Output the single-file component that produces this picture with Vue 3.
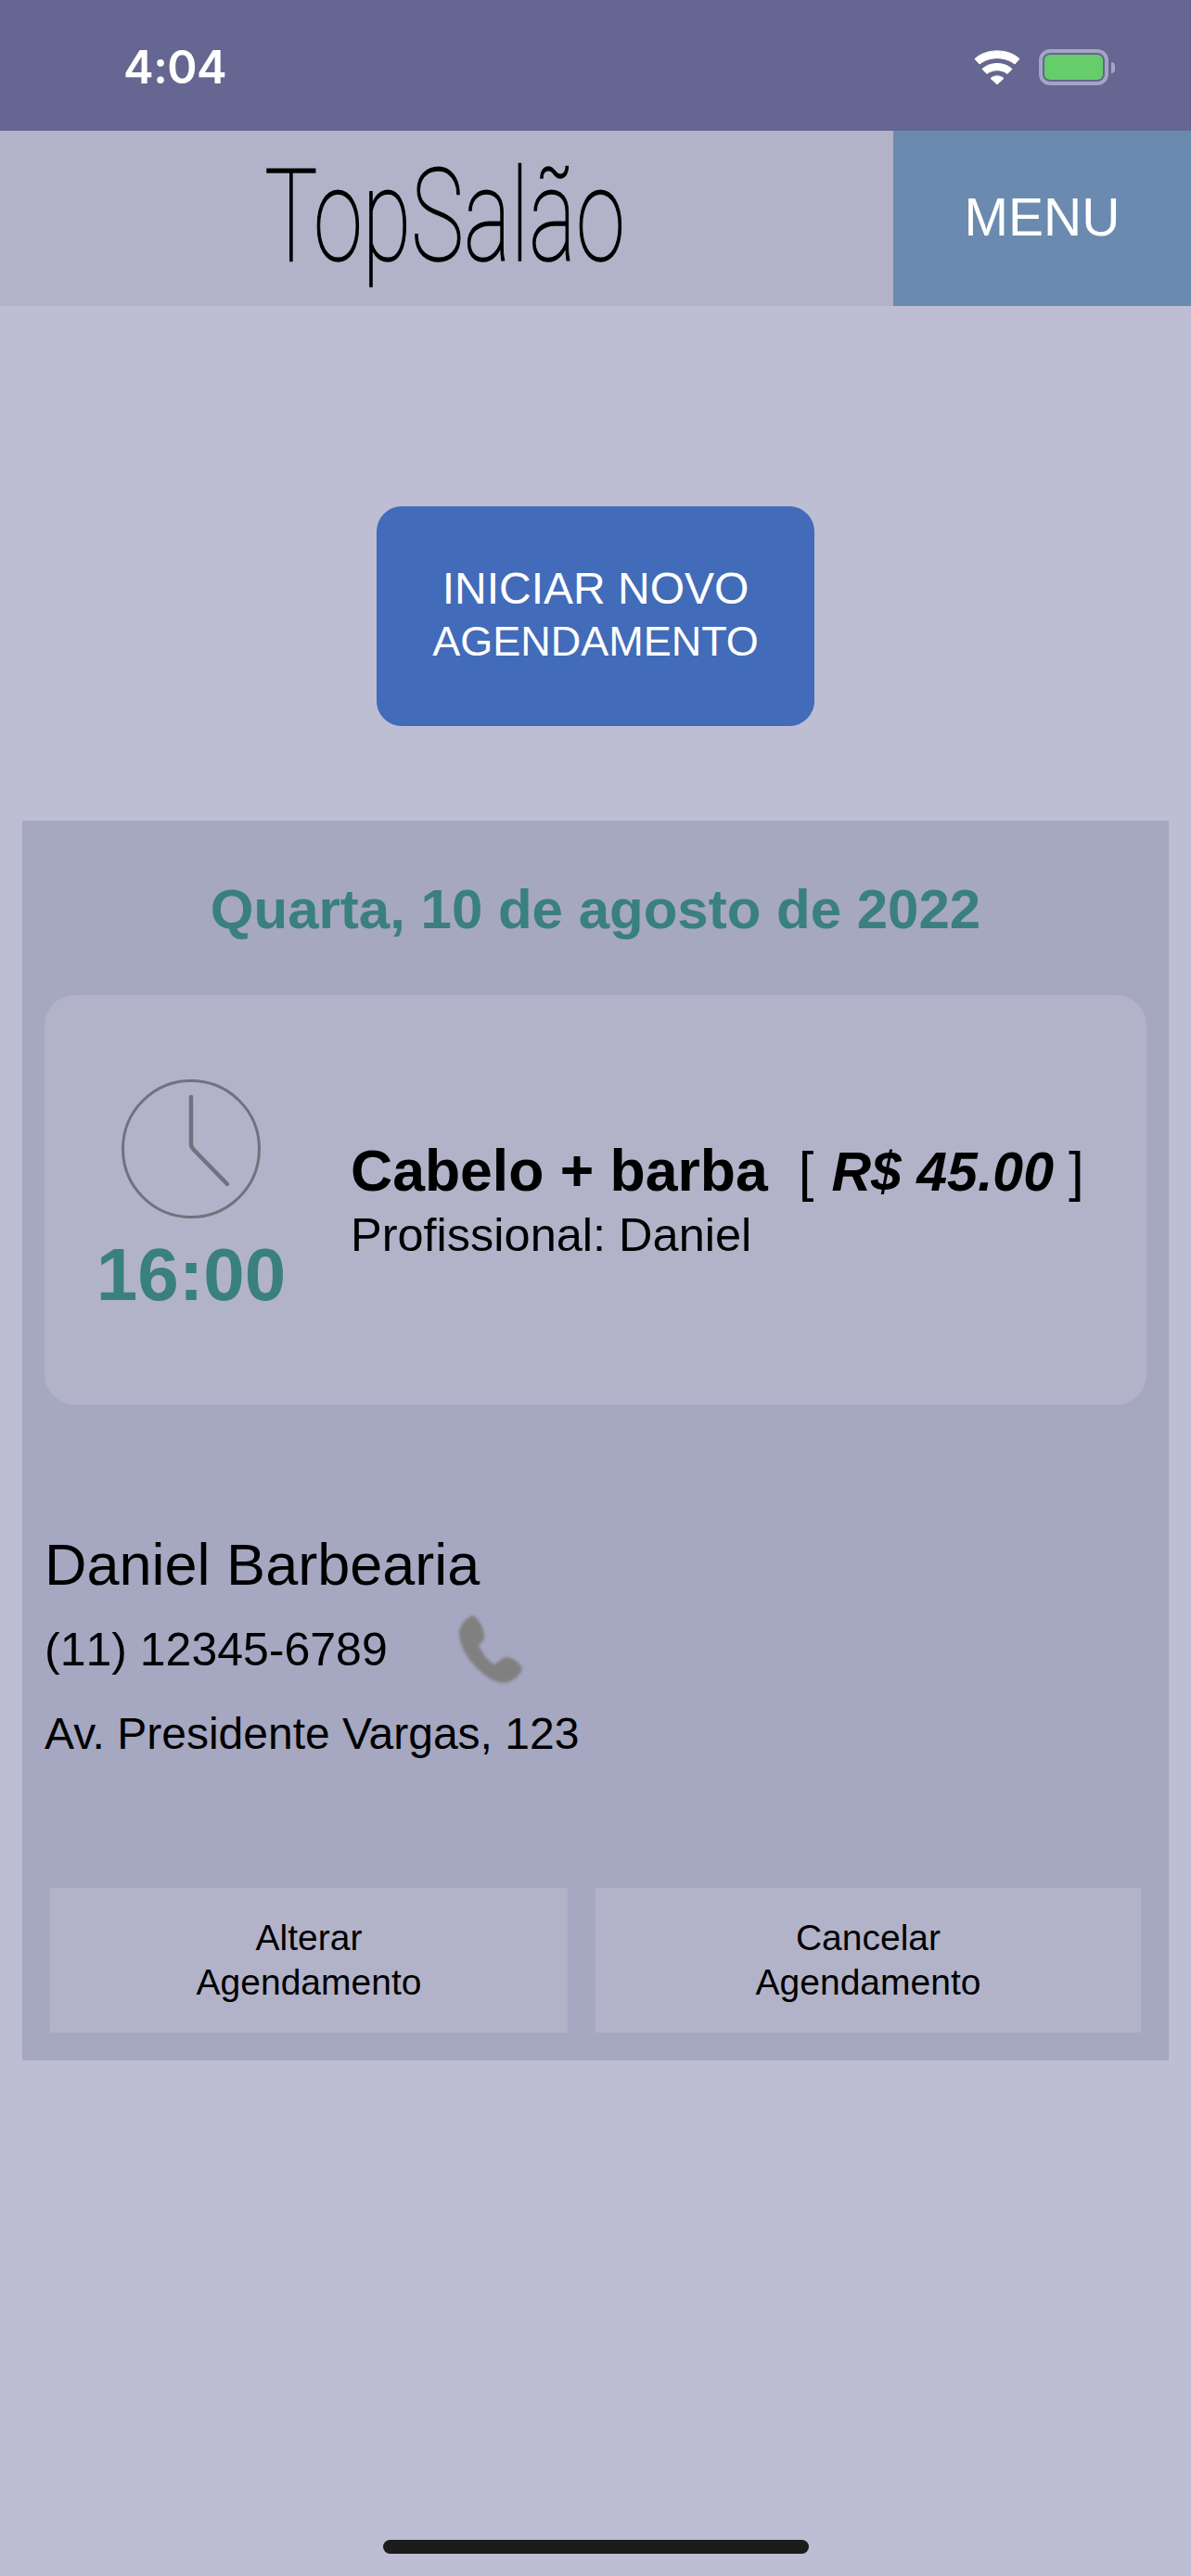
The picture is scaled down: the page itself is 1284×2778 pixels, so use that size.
<script setup>
const actions = ['Alterar', 'Cancelar']
</script>

<template>
  <div class="page">
    <div class="status">
      <span class="clock-text">4:04</span>
      <div class="status-icons">
        <svg class="wifi" width="50" height="38" viewBox="0 0 50 38" fill="#fff" stroke="#fff" stroke-width="1" stroke-linejoin="round">
          <path d="M1 9.5C13 -2 37 -2 49 9.5L44 15C33 6.5 17 6.5 6 15Z" />
          <path d="M9 20.5C17 12.5 33 12.5 41 20.5L36 25.5C29.5 20.5 20.5 20.5 14 25.5Z" />
          <path d="M18 30.5C22 27 28 27 32 30.5L25 37Z" />
        </svg>
        <div class="battery"><div class="battery-fill"></div></div>
        <div class="battery-nub"></div>
      </div>
    </div>
    <header class="topbar">
      <div class="logo"><span class="logo-text">TopSalão</span></div>
      <div class="menu">MENU</div>
    </header>
    <main class="content">
      <div class="cta"><span>INICIAR NOVO</span><span class="cta-small">AGENDAMENTO</span></div>
      <section class="panel">
        <h2 class="date">Quarta, 10 de agosto de 2022</h2>
        <div class="card">
          <div class="time">
            <svg width="150" height="150" viewBox="0 0 150 150" fill="none" stroke="#71717f" stroke-linecap="round" stroke-linejoin="round">
              <circle cx="75" cy="75" r="73.5" stroke-width="3" />
              <path d="M75 19V70Q75 73 78 76L114 113" stroke-width="4.5" />
            </svg>
            <div class="hour">16:00</div>
          </div>
          <div class="service">
            <div class="service-title"><b>Cabelo + barba</b><span class="price">[<b class="amount"><i>R$ 45.00</i></b>]</span></div>
            <div class="pro">Profissional: Daniel</div>
          </div>
        </div>
        <div class="shop">
          <div class="shop-name">Daniel Barbearia</div>
          <div class="shop-phone">
            <span>(11) 12345-6789</span>
            <svg class="phone" width="68" height="74" viewBox="0 0 68 74">
              <path d="M15 0C7 3 1 10 0 19C0 35 13 54 30 66C38 72 46 74 53 72C60 70 66 64 68 58C66 51 58 46 52 45C47 45 43 50 38 53C31 49 25 41 21 32C25 29 27 27 27 22C27 15 22 5 15 0Z" fill="#808080" />
            </svg>
          </div>
          <div class="shop-address">Av. Presidente Vargas, 123</div>
        </div>
        <div class="actions">
          <div v-for="a in actions" :key="a" class="action">{{ a }}<br />Agendamento</div>
        </div>
      </section>
    </main>
    <div class="home-bar"></div>
  </div>
</template>

<style scoped>
.page {
  width: 1284px;
  height: 2778px;
  display: flex;
  flex-direction: column;
  background: #bdbed3;
  font-family: "Liberation Sans", Arial, sans-serif;
  color: #000;
  overflow: hidden;
}
.status {
  height: 141px;
  flex: none;
  display: flex;
  align-items: flex-start;
  justify-content: space-between;
  padding: 0 82px 0 133px;
  box-sizing: border-box;
  background: #656691;
}
.clock-text {
  margin-top: 45px;
  font-family: Inter, sans-serif;
  font-weight: 600;
  font-size: 49px;
  line-height: 56px;
  letter-spacing: -0.5px;
  color: #fff;
}
.status-icons {
  margin-top: 53px;
  display: flex;
  align-items: center;
}
.wifi { margin-right: 20px; }
.battery {
  width: 75px;
  height: 39px;
  box-sizing: border-box;
  border: 4px solid #a4a5c3;
  border-radius: 12px;
  padding: 2px;
}
.battery-fill {
  height: 100%;
  background: #65cd6a;
  border-radius: 6px;
}
.battery-nub {
  width: 4px;
  height: 12px;
  margin-left: 3px;
  background: #a4a5c3;
  border-radius: 0 6px 6px 0;
}
.topbar {
  height: 189px;
  flex: none;
  display: flex;
}
.logo {
  flex: 1;
  background: #b2b3c9;
  display: flex;
  align-items: center;
  justify-content: center;
}
.logo-text {
  display: block;
  margin: 0 0 6px -4px;
  font-family: Roboto, sans-serif;
  font-weight: 100;
  font-size: 140px;
  line-height: 160px;
  transform: scaleX(0.685);
  -webkit-text-stroke: 1.5px #000;
  color: #000;
}
.menu {
  width: 321px;
  background: #6b8ab0;
  color: #fff;
  font-size: 57px;
  padding-bottom: 4px;
  box-sizing: border-box;
  display: flex;
  align-items: center;
  justify-content: center;
}
.content {
  display: flex;
  flex-direction: column;
  align-items: center;
  padding-top: 216px;
}
.cta {
  width: 472px;
  height: 237px;
  padding-bottom: 3px;
  box-sizing: border-box;
  border-radius: 27px;
  background: #426bb9;
  color: #fff;
  font-size: 48px;
  line-height: 57px;
  text-align: center;
  display: flex;
  flex-direction: column;
  align-items: center;
  justify-content: center;
}
.cta-small { font-size: 45px; }
.panel {
  align-self: stretch;
  margin: 102px 24px 0;
  height: 1337px;
  box-sizing: border-box;
  padding: 0 24px;
  background: #a6a7c1;
  display: flex;
  flex-direction: column;
}
.date {
  margin: 61px 0 0;
  font-size: 60px;
  line-height: 70px;
  font-weight: 700;
  text-align: center;
  color: #39807e;
}
.card {
  height: 442px;
  margin-top: 57px;
  flex: none;
  border-radius: 33px;
  background: #b2b3c9;
  display: flex;
  align-items: flex-start;
}
.time {
  width: 316px;
  flex: none;
  margin: 91px 14px 0 0;
  display: flex;
  flex-direction: column;
  align-items: center;
}
.time svg { display: block; }
.hour {
  font-size: 80px;
  line-height: 90px;
  font-weight: 700;
  color: #39807e;
  margin-top: 16px;
}
.service {
  margin-top: 153px;
}
.service-title {
  font-size: 62.5px;
  line-height: 72px;
  white-space: nowrap;
}
.price { margin-left: 33px; font-size: 60px; }
.amount { font-size: 59px; margin: 0 16px 0 19px; }
.pro {
  font-size: 50.5px;
  line-height: 64px;
}
.shop {
  margin-top: 136px;
}
.shop-name {
  font-size: 63px;
  line-height: 72px;
}
.shop-phone {
  margin-top: 20px;
  display: flex;
  align-items: center;
  font-size: 50px;
  font-kerning: none;
  line-height: 58px;
  height: 72px;
}
.phone {
  margin-left: 77px;
  filter: blur(1.5px);
}
.shop-address {
  margin-top: 27px;
  font-size: 48px;
  line-height: 56px;
}
.actions {
  margin-top: 138px;
  display: grid;
  grid-template-columns: 558px 588px;
  gap: 30px;
  padding: 0 6px;
}
.action {
  height: 156px;
  background: #b2b3c9;
  font-size: 39px;
  line-height: 48px;
  text-align: center;
  display: flex;
  flex-direction: column;
  justify-content: center;
}
.home-bar {
  flex: none;
  width: 459px;
  height: 15px;
  margin: auto auto 24px;
  border-radius: 8px;
  background: #1c1c1c;
}
</style>
